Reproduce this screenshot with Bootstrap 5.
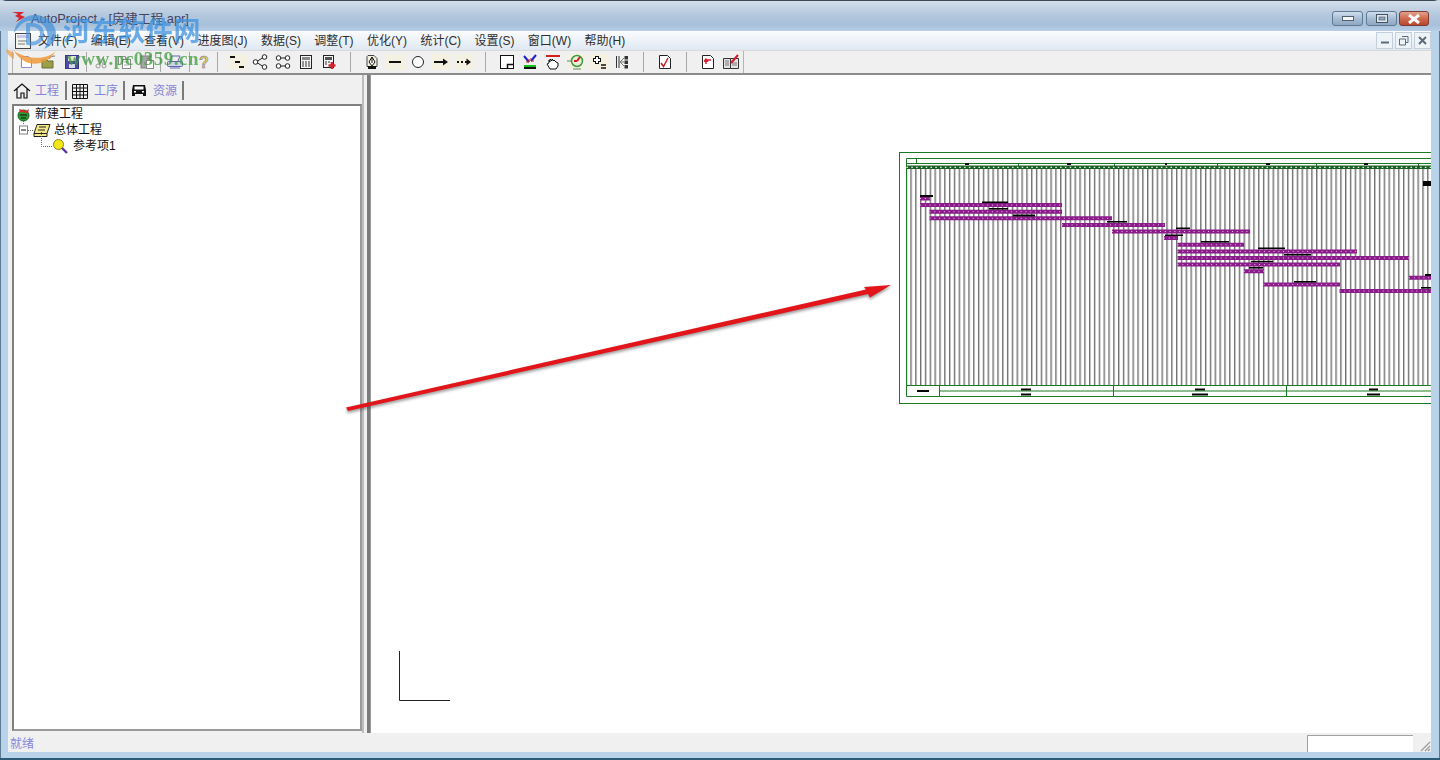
<!DOCTYPE html>
<html lang="zh-CN">
<head>
<meta charset="utf-8">
<title>AutoProject</title>
<link href="https://cdn.jsdelivr.net/npm/bootstrap@5.3.0/dist/css/bootstrap.min.css" rel="stylesheet">
<style>
html,body{height:760px;overflow:hidden;margin:0}
body{font-family:"Liberation Sans","Noto Sans CJK SC",sans-serif;font-size:12px;line-height:16px;color:#111;background:#b9d3ea}
.win-shell{height:760px;background:#b9d3ea;border-radius:6px 6px 0 0;border-top:1px solid #3c4a58;box-shadow:inset 1px 0 0 #5c7a94,inset -1px 0 0 #5c7a94}
.title-row{height:30px;background:linear-gradient(#d3dee9,#b4c8de 45%,#a8c0da 80%,#b8cfe6);padding:0 11px 0 12px}
.title-logo{margin-top:11px}
.title-txt{color:#42425e;margin-left:6px;padding-top:10px;font-size:12.8px}
.wbtn{height:15px;border:1px solid #5f7a94;border-radius:3px;background:linear-gradient(#cfdeec,#a7bdd3 50%,#8fa8c2);width:31px;margin-top:10px;margin-right:2px}
.wbtn-min{margin-right:3px}
.wbtn-close{background:linear-gradient(#e2a18e,#cf6a4e 50%,#b8482f);border-color:#7c3a30;width:30px;margin-right:0}
.menu-row{height:19px;margin:0 9px 0 8px;background:linear-gradient(#fbfcfe,#dfe8f2);padding-left:7px}
.menu-items{gap:13.4px;margin-left:7px;color:#2e2e2e}
.mdi-btn{width:17px;height:17px;border:1px solid #c3cfdb;background:#eef3f8;margin-left:2px}
.tool-row{height:25px;margin:0 9px 0 8px;background:#f0f0f0;border-top:1px solid #d9d9d9;border-bottom:2px solid #8c8c8c}
.tool-strip{margin-left:4px;padding-left:1.5px;border-left:1px solid #b5b5b5}
.tbtn{width:23px;height:20px;flex:none}
.tbeige{background:#f5f1e2;box-shadow:inset 0 0 0 2px #f0f0f0}
.tsep{width:5.5px;height:20px;flex:none}
.tsep::after,.tsep-w::after{content:"";display:block;width:1px;height:100%;background:#a8a8a8;margin:0 auto}
.tsep-w{width:20px;height:20px;flex:none}
.tbar-two{margin-left:5px}
.tend{width:1px;height:22px;background:#b5b5b5}
.main-row{height:658px;margin:0 9px 0 8px}
.left-pane{width:354px;background:#f0f0f0}
.tab-strip{height:29px;padding:2px 0 0 5px}
.tab-item{height:19px;color:#8484d4;padding-right:6px;border-right:2px solid #7a7a7a;margin-right:5px;gap:4px}
.tab-wide{padding-right:5px;margin-right:6px;gap:6px}
.tab-item span{padding-top:1px}
.tree-box{margin:0 0 2px 4px;background:#fff;border:2px solid #7f7f7f;border-right-color:#9a9a9a;border-bottom-color:#9a9a9a;height:627px}
.tree-line{height:16px}
.tree-l1{padding-left:2px;gap:4px}
.tree-l2{padding-left:5px}
.tree-l3{padding-left:25px}
.tree-svg{overflow:visible;flex:none}
.tree-gap{margin-left:3px}
.tree-gap-w{margin-left:5px}
.dot-line{stroke:#666;stroke-dasharray:1 1;fill:none}
.split-bar{width:8px;background:#f0f0f0;border-left:2px solid #bdbdbd;border-right:3px solid #7b7b7b}
.view-pane{background:#fff;overflow:hidden;border-left:1px solid #9a9a9a;height:658px}
.status-row{height:19px;margin:0 9px 0 8px;background:#f0f0f0;color:#8686da;padding-left:2px}
.status-label{padding-top:2px}
.stat-box{width:106px;height:17px;margin-top:2px;background:#fff;border-top:1px solid #a0a0a0;border-left:1px solid #a0a0a0;margin-right:18px}
.grip-svg{position:absolute;right:0;bottom:0}
.bottom-frame{height:8px;border-bottom:2px solid #2d5c78}
.grn{stroke:#1d7a24;fill:none;stroke-width:1}
.bar-base{stroke:#8b1a8b;stroke-width:4;fill:none}
.bar-dots{stroke:#e6bce6;stroke-width:1;stroke-dasharray:1 3.8;fill:none}
.blob{fill:#050505}
.band{stroke:#1c5f22;stroke-width:3.6;fill:none}
.band-dots{stroke:#e6f2e6;stroke-width:1.2;stroke-dasharray:1.5 3.3;fill:none}
.wm-layer{position:absolute;left:0;top:0;width:1440px;height:760px;pointer-events:none}
.wm-cn{position:absolute;left:63px;top:14px;font-size:27px;line-height:34px;font-weight:700;color:#3f93e0;opacity:.75;letter-spacing:.6px;white-space:nowrap}
.wm-url{position:absolute;left:67px;top:47px;font-family:"Liberation Serif",serif;font-size:19px;line-height:22px;font-weight:700;color:#3e9a3e;opacity:.75;letter-spacing:.5px;white-space:nowrap}
.arrow-shape{fill:#e2151b;filter:drop-shadow(0 2px 1.5px rgba(70,70,70,.55))}
</style>
</head>
<body>
<div class="win-shell d-flex flex-column position-relative">
  <div class="title-row d-flex flex-shrink-0">
    <svg class="title-logo" width="13" height="10" viewBox="0 0 13 10"><path d="M0 0h12l-4 3 5 2-9 5 3-4-4-2 3-2z" fill="#d8232a"/></svg>
    <div class="title-txt flex-grow-1">AutoProject - [房建工程.apr]</div>
    <div class="wbtn wbtn-min d-flex align-items-center justify-content-center"><svg width="12" height="5"><rect x=".5" y=".5" width="11" height="4" fill="#f4f6f8" stroke="#50606e"/></svg></div>
    <div class="wbtn d-flex align-items-center justify-content-center"><svg width="12" height="9"><rect x=".5" y=".5" width="11" height="8" fill="#dde5ee" stroke="#45525f"/><rect x="3" y="3" width="6" height="3" fill="#8fa8c2" stroke="#45525f" stroke-width=".6"/></svg></div>
    <div class="wbtn wbtn-close d-flex align-items-center justify-content-center"><svg width="14" height="10"><path d="M2 1l10 8M12 1L2 9" stroke="#fff" stroke-width="3"/></svg></div>
  </div>

  <div class="menu-row d-flex align-items-center flex-shrink-0">
    <svg width="16" height="16" viewBox="0 0 16 16"><rect x=".5" y=".5" width="15" height="15" fill="#f5f5ef" stroke="#444"/><rect x="2" y="2" width="12" height="3" fill="#c7c7e8"/><path d="M3 8h9M3 11h7" stroke="#777"/></svg>
    <div class="menu-items d-flex">
      <span>文件(F)</span><span>编辑(E)</span><span>查看(V)</span><span>进度图(J)</span><span>数据(S)</span><span>调整(T)</span><span>优化(Y)</span><span>统计(C)</span><span>设置(S)</span><span>窗口(W)</span><span>帮助(H)</span>
    </div>
    <div class="ms-auto d-flex">
      <div class="mdi-btn d-flex align-items-end justify-content-center pb-1"><svg width="8" height="3"><path d="M0 1.5h8" stroke="#5b6b7a" stroke-width="2"/></svg></div>
      <div class="mdi-btn d-flex align-items-center justify-content-center"><svg width="10" height="10"><path d="M3 .5h6v6H7M.5 3h6v6h-6z" fill="none" stroke="#5b6b7a"/></svg></div>
      <div class="mdi-btn d-flex align-items-center justify-content-center"><svg width="9" height="9"><path d="M1 1l7 7M8 1L1 8" stroke="#5b6b7a" stroke-width="2"/></svg></div>
    </div>
  </div>

  <div class="tool-row d-flex align-items-center flex-shrink-0">
    <div class="tool-strip d-flex align-items-center">
      <div class="tbtn d-flex align-items-center justify-content-center"><svg width="16" height="16"><path d="M3.5 2.5h7l3 3v8h-10z" fill="#fff" stroke="#8c8ccc"/></svg></div>
      <div class="tbtn d-flex align-items-center justify-content-center"><svg width="16" height="16"><path d="M1 14V6h5l1 1h5v7z" fill="#9aa04a" stroke="#6c6c30"/><path d="M8 5c1-2 3-3 6-3" stroke="#777" fill="none"/></svg></div>
      <div class="tbtn d-flex align-items-center justify-content-center"><svg width="16" height="16"><rect x="1.5" y="1.5" width="13" height="13" fill="#4c4ca6" stroke="#38388a"/><rect x="4" y="2" width="8" height="5" fill="#e8e8d0"/><rect x="5" y="10" width="6" height="4" fill="#d7d7e8"/></svg></div>
      <div class="tsep"></div>
      <div class="tbtn d-flex align-items-center justify-content-center"><svg width="16" height="16" fill="none" stroke="#9a9a9a"><path d="M5 2l5 8M11 2L6 10"/><circle cx="5" cy="12" r="2"/><circle cx="11" cy="12" r="2"/></svg></div>
      <div class="tbtn d-flex align-items-center justify-content-center"><svg width="16" height="16"><rect x="6.5" y="5.5" width="8" height="9" fill="#fff" stroke="#8a8a8a"/><path d="M2.5 10.5v-8h7v3" fill="none" stroke="#8a8a8a"/><path d="M8 8h5M8 11h5" stroke="#aaa"/></svg></div>
      <div class="tbtn d-flex align-items-center justify-content-center"><svg width="16" height="16"><rect x="2" y="2" width="10" height="12" fill="#a6a6a6" stroke="#808080"/><rect x="7.5" y="6.5" width="7" height="8" fill="#fff" stroke="#8a8a8a"/></svg></div>
      <div class="tsep"></div>
      <div class="tbtn d-flex align-items-center justify-content-center"><svg width="18" height="16" fill="none" stroke="#5f68ac"><rect x="1.5" y="7.5" width="15" height="5" rx="1" fill="#cfd3ea"/><path d="M4 7l2-5h8l-2 5M4 14h10"/></svg></div>
      <div class="tsep"></div>
      <div class="tbtn d-flex align-items-center justify-content-center"><svg width="16" height="16"><text x="8" y="14" text-anchor="middle" font-family="Liberation Sans" font-weight="700" font-size="16" fill="#e4d24a" stroke="#6b6ba8" stroke-width=".5">?</text></svg></div>
      <div class="tsep"></div>
      <div class="tbtn tbeige tbar-two d-flex align-items-center justify-content-center"><svg width="16" height="16"><path d="M1 3h5M6 8h5M10 13h5" stroke="#111" stroke-width="2"/></svg></div>
      <div class="tbtn d-flex align-items-center justify-content-center"><svg width="16" height="16" fill="#fff" stroke="#222"><path d="M4 8l8-5M4 8l8 5"/><circle cx="3.5" cy="8" r="2.3"/><circle cx="12.5" cy="3" r="2.3"/><circle cx="12.5" cy="13" r="2.3"/></svg></div>
      <div class="tbtn d-flex align-items-center justify-content-center"><svg width="16" height="16" fill="#fff" stroke="#222"><path d="M3 4h10M3 12h10"/><circle cx="3.5" cy="4" r="2.3"/><circle cx="12.5" cy="4" r="2.3"/><circle cx="3.5" cy="12" r="2.3"/><circle cx="12.5" cy="12" r="2.3"/></svg></div>
      <div class="tbtn d-flex align-items-center justify-content-center"><svg width="16" height="16"><rect x="2.5" y="1.5" width="11" height="13" fill="#f4f4f4" stroke="#222"/><rect x="4" y="3" width="8" height="3" fill="#8a8a8a"/><path d="M4 8h2M7 8h2M10 8h2M4 10h2M7 10h2M10 10h2M4 12h2M7 12h2M10 12h2" stroke="#333"/></svg></div>
      <div class="tbtn d-flex align-items-center justify-content-center"><svg width="16" height="16"><rect x="2.5" y="1.5" width="10" height="12" fill="#f4f4f4" stroke="#222"/><rect x="4" y="3" width="7" height="3" fill="#555"/><path d="M4 8h2M7 8h2M4 10h2" stroke="#333"/><path d="M11 8v7M7.5 11.5h7" stroke="#d6202a" stroke-width="2.6"/></svg></div>
      <div class="tsep-w"></div>
      <div class="tbtn d-flex align-items-center justify-content-center"><svg width="16" height="16"><path d="M4 1.5h6l3 3v8H3v-10z" fill="#f3efe0" stroke="#444"/><path d="M8 3L5 8l3 4 3-4zM8 3v6" fill="#fff" stroke="#111"/><rect x="4" y="12" width="8" height="3" fill="#111"/></svg></div>
      <div class="tbtn tbeige d-flex align-items-center justify-content-center"><svg width="16" height="16"><path d="M2 8h12" stroke="#111" stroke-width="2"/></svg></div>
      <div class="tbtn d-flex align-items-center justify-content-center"><svg width="16" height="16"><circle cx="8" cy="8" r="5.5" fill="#fff" stroke="#222"/></svg></div>
      <div class="tbtn tbeige d-flex align-items-center justify-content-center"><svg width="16" height="16"><path d="M1 8h10" stroke="#111" stroke-width="2"/><path d="M10 4.5l5 3.5-5 3.5z" fill="#111"/></svg></div>
      <div class="tbtn tbeige d-flex align-items-center justify-content-center"><svg width="16" height="16"><path d="M1 8h2M5 8h2M9 8h2" stroke="#111" stroke-width="2"/><path d="M10.5 4.5l4.5 3.5-4.5 3.500z" fill="#111"/></svg></div>
      <div class="tsep-w"></div>
      <div class="tbtn d-flex align-items-center justify-content-center"><svg width="16" height="16" fill="none" stroke="#111"><rect x="1.5" y="1.5" width="13" height="13" fill="#fff"/><path d="M8.5 14.5v-4h6" stroke-width="1.5"/></svg></div>
      <div class="tbtn d-flex align-items-center justify-content-center"><svg width="16" height="16"><rect x="2" y="11" width="12" height="2" fill="#16c11a"/><rect x="2" y="13" width="12" height="2" fill="#111"/><path d="M2 2l5 6M14 1L9 7" stroke="#2222c8" stroke-width="2"/><path d="M7 8V5M7 8H4M9 7V4M9 7h3" stroke="#c82222"/></svg></div>
      <div class="tbtn d-flex align-items-center justify-content-center"><svg width="16" height="16"><rect x="1" y="1" width="14" height="2" fill="#d62020"/><path d="M5 15l-3-5 2-1V6l1 2V5l2 2V5l2 2V6l2 2 2 1v3l-2 3z" fill="#fff" stroke="#111"/></svg></div>
      <div class="tbtn tbeige d-flex align-items-center justify-content-center"><svg width="18" height="16"><circle cx="10" cy="7" r="5.5" fill="#eaf2dc" stroke="#3c9a3c" stroke-width="1.5"/><path d="M10 7l3-4M10 7H7" stroke="#d01818" stroke-width="2"/><path d="M0 7h4M6 15h8" stroke="#5b8a5b"/></svg></div>
      <div class="tbtn tbeige d-flex align-items-center justify-content-center"><svg width="16" height="16"><path d="M6 2v8M2 6h8" stroke="#111" stroke-width="4"/><path d="M6 3v6M3 6h6" stroke="#fff" stroke-width="2"/><path d="M10 11h5M10 14h5" stroke="#111" stroke-width="1.6"/></svg></div>
      <div class="tbtn d-flex align-items-center justify-content-center"><svg width="16" height="16" fill="none" stroke="#333"><path d="M2.5 2v12M5 2v12"/><path d="M6 8l4-4M6 8l4 4M6 8h4" stroke="#777"/><rect x="11" y="2.5" width="2.5" height="2.5" fill="#333"/><rect x="11" y="7" width="2.5" height="2.5" fill="#333"/><rect x="11" y="11.5" width="2.5" height="2.5" fill="#333"/></svg></div>
      <div class="tsep-w"></div>
      <div class="tbtn d-flex align-items-center justify-content-center"><svg width="16" height="16"><path d="M2.5 1.5h8l3 3v10h-11z" fill="#fff" stroke="#222"/><path d="M4 9l2.5 3.5L11 4" fill="none" stroke="#d31c2a" stroke-width="1.5"/></svg></div>
      <div class="tsep-w"></div>
      <div class="tbtn d-flex align-items-center justify-content-center"><svg width="16" height="16"><path d="M2.5 1.5h8l3 3v10h-11z" fill="#fff" stroke="#222"/><path d="M11 6H6v4M4 7.5L6 5l2 2.5" fill="none" stroke="#d31c2a" stroke-width="1.4"/></svg></div>
      <div class="tbtn d-flex align-items-center justify-content-center"><svg width="18" height="16"><path d="M1.5 4.5h7v10h-7zM8.5 4.5h8v10h-8z" fill="#e4e4e4" stroke="#333"/><path d="M3 7h4M3 9h4M3 11h4M10 9h5M10 11h5" stroke="#777"/><path d="M9 9l7-8" stroke="#d31c2a" stroke-width="2"/></svg></div>
      <div class="tend"></div>
    </div>
  </div>

  <div class="main-row d-flex flex-shrink-0">
    <div class="left-pane flex-shrink-0">
      <div class="tab-strip d-flex align-items-center">
        <div class="tab-item d-flex align-items-center"><svg width="18" height="18" fill="none" stroke="#111" stroke-width="1.2"><path d="M1 9l8-7 8 7M4 7v9h4v-5h3v5h3V7"/></svg><span>工程</span></div>
        <div class="tab-item tab-wide d-flex align-items-center"><svg width="16" height="16" fill="none" stroke="#111"><path d="M.5 1.5h15v14H.5zM.5 5h15M.5 8.500h15M.5 12h15M4.500 1.500v14M8 1.500v14M11.500 1.500v14"/></svg><span>工序</span></div>
        <div class="tab-item tab-wide d-flex align-items-center"><svg width="16" height="14"><path d="M2 1h12l1 5v6h-3v-2H4v2H1V6z" fill="#111"/><rect x="3.5" y="2.5" width="9" height="3" fill="#fff"/><rect x="3" y="7" width="2" height="1.5" fill="#fff"/><rect x="11" y="7" width="2" height="1.5" fill="#fff"/></svg><span>资源</span></div>
      </div>
      <div class="tree-box">
        <div class="tree-line tree-l1 d-flex align-items-center"><svg width="15" height="16"><circle cx="7.5" cy="9.5" r="5.500" fill="#2c9a32" stroke="#14591a"/><path d="M3 3l7 2 3-2-1 4-8-1z" fill="#d8282a"/><path d="M4 9h7M5 12h5" stroke="#111"/></svg><span>新建工程</span></div>
        <div class="tree-line tree-l2 d-flex align-items-center"><svg class="tree-svg" width="14" height="16"><path class="dot-line" d="M4.500 -1V3M9 8.500H14"/><rect x=".5" y="4" width="8" height="8" fill="#fff" stroke="#808080"/><path d="M2 8h5" stroke="#111"/></svg><svg class="tree-svg" width="18" height="16"><path d="M4 2.5h13l-3 9H1z" fill="#f4e98a" stroke="#222"/><path d="M1 11.5h13v3H1z" fill="#f4e98a" stroke="#222"/><path d="M6 5h7M5 8h7" stroke="#222"/></svg><span class="tree-gap">总体工程</span></div>
        <div class="tree-line tree-l3 d-flex align-items-center"><svg class="tree-svg" width="13" height="16"><path class="dot-line" d="M2.500 -6V8.500H13"/></svg><svg class="tree-svg" width="16" height="16"><circle cx="6.500" cy="6.500" r="5" fill="#f5e616" stroke="#8a8a1a"/><path d="M10 10l5 5" stroke="#5a3a9a" stroke-width="2.4"/></svg><span class="tree-gap-w">参考项1</span></div>
      </div>
    </div>
    <div class="split-bar flex-shrink-0"></div>
    <div class="view-pane flex-grow-1">
      <svg width="1060" height="658" viewBox="371 75 1060 658" class="d-block">
        <defs>
          <path id="barPaths" d="M920 198.500H930M920 205.100H1062M929.500 211.700H1062M929.500 218.300H1112M1062 224.900H1165M1112 231.500H1250M1164 238.100H1178M1177.500 244.800H1244M1177.500 251.400H1357M1177.500 258H1409M1177.500 264.600H1340M1244 271.200H1264M1409 277.800H1431M1263.500 284.400H1340M1339.500 291H1431"/>
          <pattern id="vgrid" patternUnits="userSpaceOnUse" x="905.500" y="0" width="4.830" height="10"><rect x="0" y="0" width="1.400" height="10" fill="#707070"/></pattern>
        </defs>
        <rect x="907" y="169" width="524" height="216" fill="url(#vgrid)"/>
        <rect class="grn" x="899.500" y="152.500" width="560" height="251"/>
        <path class="grn" d="M906.500 158.500H1431M906.500 163.500H1431M906.500 158.500V396.500M916.500 158.500V163.500M1018.500 163.500V166M1114.500 163.500V166M1217.500 163.500V166M1316.500 163.500V166M1418.500 163.500V166M906.500 385.500H1431M939.500 391H1431M906.500 396.500H1431M939.500 385.500V396.500M1113.500 385.500V396.500M1286.500 385.500V396.500"/>
        <path class="band" d="M906.500 167.300H1431"/>
        <path class="band-dots" d="M906.500 167.300H1431"/>
        <use href="#barPaths" class="bar-base"/>
        <use href="#barPaths" class="bar-dots"/>
        <g class="blob">
          <rect x="965" y="163" width="4" height="2"/><rect x="1067" y="163" width="4" height="2"/><rect x="1266" y="163" width="4" height="2"/><rect x="1364" y="163" width="4" height="2"/><rect x="1165" y="163" width="2" height="2"/>
          <rect x="1423" y="181" width="8" height="5"/>
          <rect x="920" y="195" width="13" height="2"/><rect x="982" y="201.500" width="26" height="1.600"/><rect x="989" y="208" width="19" height="1.600"/><rect x="1013" y="214.500" width="22" height="2"/><rect x="1107" y="221" width="20" height="1.600"/><rect x="1176" y="227.500" width="14" height="1.600"/><rect x="1165" y="234.500" width="18" height="1.500"/><rect x="1201" y="241" width="28" height="1.600"/><rect x="1258" y="247.500" width="27" height="1.600"/><rect x="1284" y="254" width="27" height="1.600"/><rect x="1251" y="260.800" width="22" height="1.500"/><rect x="1249" y="267" width="14" height="1.600"/><rect x="1425" y="274" width="6" height="2"/><rect x="1294" y="281" width="22" height="1.600"/><rect x="1421" y="287" width="10" height="1.600"/>
          <rect x="917" y="390" width="12" height="2"/><rect x="1021" y="388.500" width="10" height="2"/><rect x="1021" y="393.500" width="10" height="2"/><rect x="1195" y="388.500" width="10" height="2"/><rect x="1192" y="393.500" width="16" height="2"/><rect x="1369" y="388.500" width="9" height="2"/><rect x="1367" y="393.500" width="13" height="2"/>
        </g>
        <path d="M399.500 651V700.500H450" fill="none" stroke="#222"/>
      </svg>
    </div>
  </div>

  <div class="status-row d-flex align-items-center flex-shrink-0 position-relative">
    <span class="status-label flex-grow-1">就绪</span>
    <div class="stat-box"></div>
    <svg class="grip-svg" width="12" height="12"><path d="M11 2L2 11M11 6l-5 5M11 9l-2 2" stroke="#9a9a9a" stroke-width="1.2"/></svg>
  </div>
  <div class="bottom-frame flex-shrink-0"></div>

  <div class="wm-layer">
    <svg width="70" height="72" viewBox="0 0 70 72" class="position-absolute top-0 start-0">
      <path d="M14 32a20 18 0 1 1 42 2 20 18 0 0 1-12 14c6-8 6-26-10-28-10-1-14 4-20 12z" fill="#3f8fd8" opacity=".7"/>
      <path d="M28 24v18c8 2 14-2 14-9s-6-10-14-9z" fill="none" stroke="#3f8fd8" stroke-width="4" opacity=".65"/>
      <path d="M14 50c10 16 30 18 42 0-8 8-26 10-42 0z" fill="#ef9a3c" opacity=".85"/>
      <path d="M6 48c0 4 4 8 8 10l0-6z" fill="#ef9a3c" opacity=".7"/>
    </svg>
    <div class="wm-cn">河东软件网</div>
    <div class="wm-url">www.pc0359.cn</div>
    <svg width="1440" height="760" class="position-absolute top-0 start-0"><polygon class="arrow-shape" points="346,406.500 866,288.500 864,286 891,284 870,296.500 868,293 348,410"/></svg>
  </div>
</div>
</body>
</html>
